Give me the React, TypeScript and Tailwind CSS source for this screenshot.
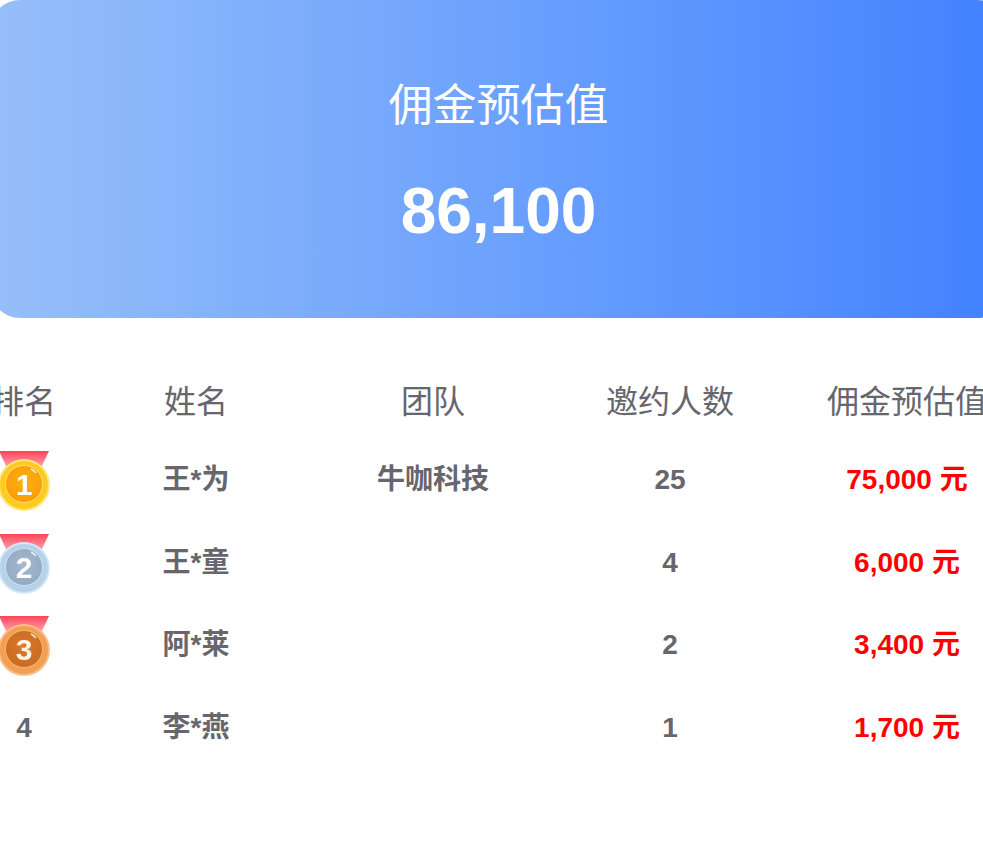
const rows = [
  { name: "王*为", team: "牛咖科技", count: "25", money: "75,000 元", rank: 1 },
  { name: "王*童", team: "", count: "4", money: "6,000 元", rank: 2 },
  { name: "阿*莱", team: "", count: "2", money: "3,400 元", rank: 3 },
  { name: "李*燕", team: "", count: "1", money: "1,700 元", rank: 4 },
];

const medalColors: Record<number, { rim: string; rimLight: string; inner: string; innerDark: string; text: string }> = {
  1: { rim: "#ffcb20", rimLight: "#ffe680", inner: "#ffb010", innerDark: "#f99a08", text: "#ffffff" },
  2: { rim: "#b5d2ea", rimLight: "#d5e6f5", inner: "#a5b9cf", innerDark: "#92a9c2", text: "#ffffff" },
  3: { rim: "#f4a052", rimLight: "#f7bf8a", inner: "#dc7a2c", innerDark: "#c8691f", text: "#fff4e6" },
};

function Medal({ rank }: { rank: number }) {
  const c = medalColors[rank];
  return (
    <svg width="56" height="64" viewBox="0 0 56 64" className="shrink-0 blur-[0.5px]">
      <defs>
        <linearGradient id={`rib${rank}`} x1="0" y1="0" x2="0" y2="1">
          <stop offset="0" stopColor="#ff4458" />
          <stop offset="1" stopColor="#ffa9b2" />
        </linearGradient>
        <radialGradient id={`in${rank}`} cx="0.5" cy="0.45" r="0.6">
          <stop offset="0" stopColor={c.inner} />
          <stop offset="1" stopColor={c.innerDark} />
        </radialGradient>
      </defs>
      <path d="M3 3H53L45 20H11Z" fill={`url(#rib${rank})`} />
      <circle cx="28" cy="37" r="26" fill={c.rimLight} />
      <circle cx="28" cy="37" r="24" fill={c.rim} />
      <circle cx="28" cy="36" r="18.5" fill={`url(#in${rank})`} stroke={c.rimLight} strokeWidth="0.8" />
      <path d="M35 21a17 17 0 0 1 5 4" stroke="#fff" strokeOpacity="0.8" strokeWidth="1.5" fill="none" />
      <text x="28" y="47" textAnchor="middle" fontSize="30" fontWeight="700" fill={c.text} fontFamily="Liberation Sans, sans-serif">{rank}</text>
    </svg>
  );
}

export default function App() {
  return (
    <div className="w-[983px] h-[846px] overflow-hidden bg-white font-['Liberation_Sans','Noto_Sans_CJK_SC',sans-serif] text-[#66666c]">
      <div className="-ml-[10px] w-[1017px] h-[318px] rounded-[30px] bg-gradient-to-r from-[#97bff9] to-[#4181ff] flex flex-col items-center pt-[77px] text-white">
        <div className="text-[44px] leading-[58px]">佣金预估值</div>
        <div className="mt-[39px] text-[64px] leading-[74px] font-bold">86,100</div>
      </div>
      <div className="mt-[62px] h-[44px] flex items-center text-[32px] whitespace-nowrap w-[996px]">
        <div className="w-[48px] shrink-0 flex justify-center">排名</div>
        <div className="w-[296px] shrink-0 text-center">姓名</div>
        <div className="w-[178px] shrink-0 text-center">团队</div>
        <div className="w-[296px] shrink-0 text-center">邀约人数</div>
        <div className="w-[178px] shrink-0 flex justify-center">佣金预估值</div>
      </div>
      <div className="mt-[15px] w-[996px]">
        {rows.map((r) => (
          <div key={r.name} className="h-[82.5px] flex items-center text-[28px] font-bold">
            <div className="w-[48px] shrink-0 flex justify-center">
              {r.rank < 4 ? <Medal rank={r.rank} /> : <span>4</span>}
            </div>
            <div className="w-[296px] shrink-0 text-center">{r.name}</div>
            <div className="w-[178px] shrink-0 text-center">{r.team}</div>
            <div className="w-[296px] shrink-0 text-center">{r.count}</div>
            <div className="w-[178px] shrink-0 text-center text-[#f00] whitespace-nowrap">{r.money}</div>
          </div>
        ))}
      </div>
    </div>
  );
}
